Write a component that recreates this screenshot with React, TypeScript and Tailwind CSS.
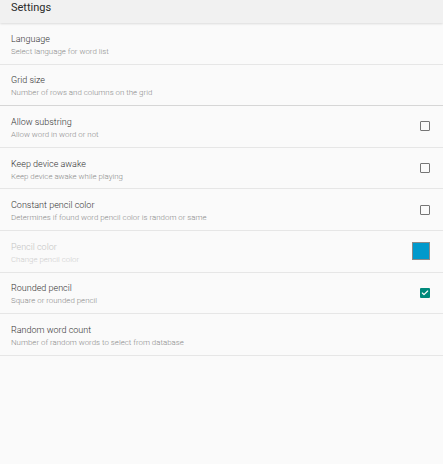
import { Check } from "lucide-react"

type Pref = {
  title: string
  summary: string
  control?: "checkbox" | "checked" | "swatch"
  disabled?: boolean
  strong?: boolean
}

const prefs: Pref[] = [
  { title: "Language", summary: "Select language for word list" },
  { title: "Grid size", summary: "Number of rows and columns on the grid", strong: true },
  { title: "Allow substring", summary: "Allow word in word or not", control: "checkbox" },
  { title: "Keep device awake", summary: "Keep device awake while playing", control: "checkbox" },
  { title: "Constant pencil color", summary: "Determines if found word pencil color is random or same", control: "checkbox" },
  { title: "Pencil color", summary: "Change pencil color", control: "swatch", disabled: true },
  { title: "Rounded pencil", summary: "Square or rounded pencil", control: "checked" },
  { title: "Random word count", summary: "Number of random words to select from database" },
]

function Control({ kind }: { kind: Pref["control"] }) {
  if (kind === "checkbox") {
    return <div className="w-[10px] h-[10px] rounded-[1px] border-[1.5px] border-[#757575]" />
  }
  if (kind === "checked") {
    return (
      <div className="w-[10px] h-[10px] rounded-[1px] bg-[#00897b] flex items-center justify-center">
        <Check className="w-[8px] h-[8px] text-white" strokeWidth={3.5} />
      </div>
    )
  }
  if (kind === "swatch") {
    return <div className="w-[18px] h-[18px] bg-[#0099cc] border border-[#8a8a8a]" />
  }
  return null
}

export default function App() {
  return (
    <div className="w-[443px] h-[464px] bg-[#fafafa] font-['Roboto',sans-serif] font-light overflow-hidden">
      <header className="h-[23px] bg-[#f1f1f1] px-[11px] flex items-center shadow-[0_1px_2px_rgba(0,0,0,0.12)] relative">
        <h1 className="text-[11px] leading-none text-[#2a2a2a] font-normal -mt-[8px]">Settings</h1>
      </header>

      <div>
        {prefs.map((p) => (
          <div
            key={p.title}
            className={`h-[41.6px] pl-[11px] pr-[13px] flex items-center justify-between border-b ${
              p.strong ? "border-[#d6d6d6]" : "border-[#e6e6e6]"
            }`}
          >
            <div className="flex flex-col pt-[3px]">
              <span className={`text-[9px] leading-[12px] ${p.disabled ? "text-[#c4c4c4]" : "text-[#333333]"}`}>
                {p.title}
              </span>
              <span className={`text-[7.9px] leading-[10px] mt-[2px] ${p.disabled ? "text-[#cdcdcd]" : "text-[#8a8a8a]"}`}>
                {p.summary}
              </span>
            </div>
            <Control kind={p.control} />
          </div>
        ))}
      </div>
    </div>
  )
}
